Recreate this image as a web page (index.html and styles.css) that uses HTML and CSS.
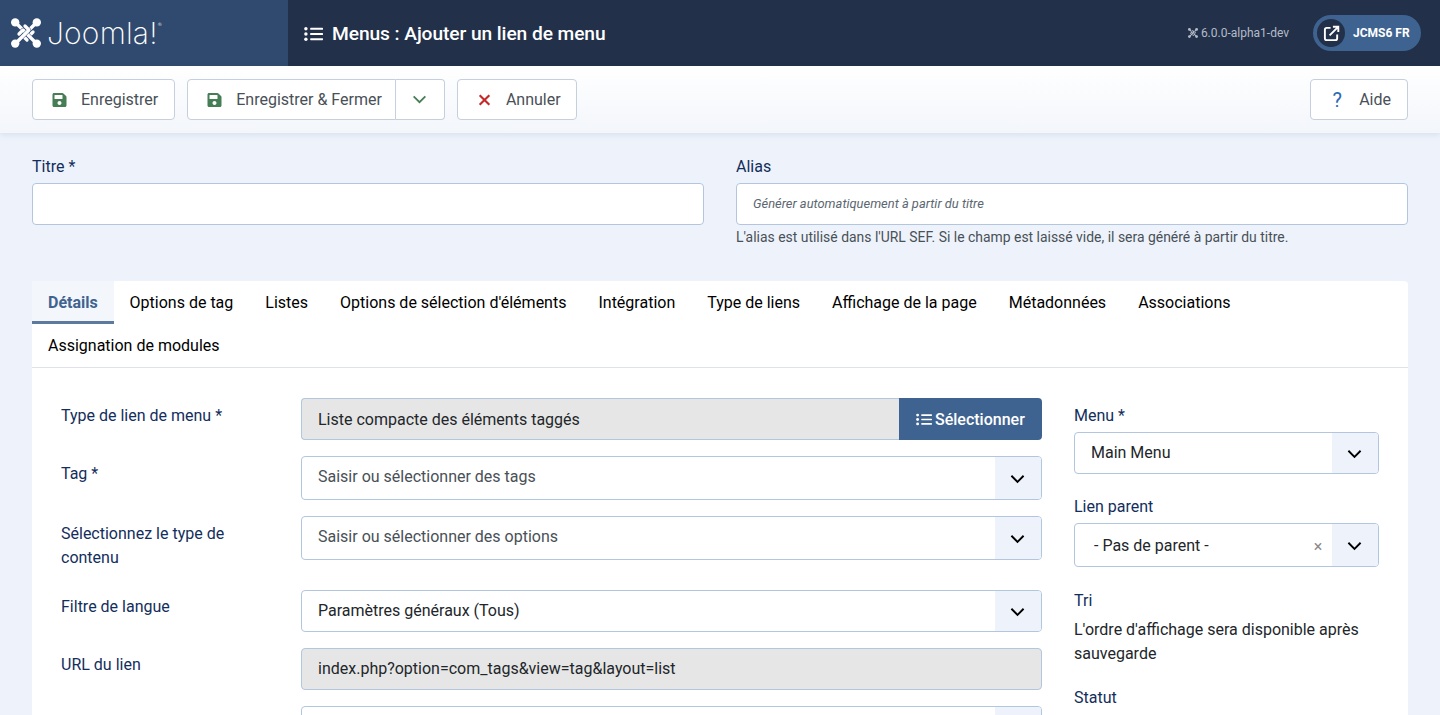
FILE: index.html
```html
<!DOCTYPE html>
<html lang="fr">
<head>
<meta charset="utf-8">
<title>Menus : Ajouter un lien de menu</title>
<link rel="stylesheet" href="styles.css">
</head>
<body>
<svg class="defs" width="0" height="0">
  <symbol id="i-joomla" viewBox="0 0 30 30">
    <g fill="none" stroke-linejoin="round" stroke-linecap="round">
      <path class="weave-under" d="M4 4 L18 18 L22 14"/>
      <path class="weave-over" d="M4 4 L18 18 L22 14"/>
      <path class="weave-under" d="M26 4 L12 18 L16 22"/>
      <path class="weave-over" d="M26 4 L12 18 L16 22"/>
      <path class="weave-under" d="M26 26 L12 12 L8 16"/>
      <path class="weave-over" d="M26 26 L12 12 L8 16"/>
      <path class="weave-under" d="M4 26 L18 12 L14 8"/>
      <path class="weave-over" d="M4 26 L18 12 L14 8"/>
    </g>
    <g fill="currentColor">
      <circle cx="4.200" cy="4.400" r="4.200"/>
      <circle cx="25.800" cy="4.400" r="4.200"/>
      <circle cx="4.200" cy="25.600" r="4.200"/>
      <circle cx="25.800" cy="25.600" r="4.200"/>
    </g>
  </symbol>
  <symbol id="i-list" viewBox="0 0 20 16">
    <g fill="currentColor">
      <circle cx="2" cy="2.500" r="1.800"/>
      <circle cx="2" cy="8" r="1.800"/>
      <circle cx="2" cy="13.500" r="1.800"/>
      <rect x="6.500" y="1.500" width="13.500" height="2" rx=".6"/>
      <rect x="6.500" y="7" width="13.500" height="2" rx=".6"/>
      <rect x="6.500" y="12.500" width="13.500" height="2" rx=".6"/>
    </g>
  </symbol>
  <symbol id="i-save" viewBox="0 0 448 512">
    <path fill="currentColor" d="M433.941 129.941l-83.882-83.882A48 48 0 0 0 316.118 32H48C21.49 32 0 53.49 0 80v352c0 26.51 21.49 48 48 48h352c26.51 0 48-21.49 48-48V163.882a48 48 0 0 0-14.059-33.941zM224 416c-35.346 0-64-28.654-64-64 0-35.346 28.654-64 64-64s64 28.654 64 64c0 35.346-28.654 64-64 64zm96-304.520V212c0 6.627-5.373 12-12 12H76c-6.627 0-12-5.373-12-12V108c0-6.627 5.373-12 12-12h228.520c3.183 0 6.235 1.264 8.485 3.515l3.480 3.480A11.996 11.996 0 0 1 320 111.480z"/>
  </symbol>
  <symbol id="i-chevron" viewBox="0 0 16 10">
    <path d="M1.500 1.500 L8 8 L14.500 1.500" fill="none" stroke="currentColor" stroke-width="2"/>
  </symbol>
</svg>

<header class="topbar">
  <div class="brand">
    <svg class="brand-icon"><use href="#i-joomla"/></svg>
    <span class="brand-name">Joomla!<sup class="brand-reg">®</sup></span>
  </div>
  <div class="topbar-main">
    <svg class="title-icon"><use href="#i-list"/></svg>
    <h1 class="page-title">Menus : Ajouter un lien de menu</h1>
    <div class="version">
      <svg class="version-icon"><use href="#i-joomla"/></svg>
      <span>6.0.0-alpha1-dev</span>
    </div>
    <div class="site-pill">
      <span class="site-pill-icon">
        <svg viewBox="0 0 18 18" class="ext-icon">
          <path d="M8 3 H4 a2 2 0 0 0 -2 2 V14 a2 2 0 0 0 2 2 H13 a2 2 0 0 0 2 -2 V10" fill="none" stroke="currentColor" stroke-width="2"/>
          <path d="M7 11 L15.500 2.500 M10.500 1.800 H16.200 V7.500" fill="none" stroke="currentColor" stroke-width="2"/>
        </svg>
      </span>
      <span class="site-pill-text">JCMS6 FR</span>
    </div>
  </div>
</header>

<nav class="toolbar">
  <button class="btn btn-save"><svg class="btn-icon green"><use href="#i-save"/></svg>Enregistrer</button>
  <div class="btn-group">
    <button class="btn btn-main"><svg class="btn-icon green"><use href="#i-save"/></svg>Enregistrer &amp; Fermer</button>
    <button class="btn btn-toggle"><svg class="toggle-chevron"><use href="#i-chevron"/></svg></button>
  </div>
  <button class="btn">
    <svg class="btn-icon red" viewBox="0 0 14 14"><path d="M2.500 2.500 L11.500 11.500 M11.500 2.500 L2.500 11.500" fill="none" stroke="currentColor" stroke-width="2"/></svg>Annuler
  </button>
  <button class="btn btn-help"><span class="help-mark">?</span>Aide</button>
</nav>

<main class="content">
  <section class="title-row">
    <div class="field">
      <label class="label">Titre *</label>
      <div class="input"></div>
    </div>
    <div class="field">
      <label class="label">Alias</label>
      <div class="input placeholder">Générer automatiquement à partir du titre</div>
      <p class="help">L'alias est utilisé dans l'URL SEF. Si le champ est laissé vide, il sera généré à partir du titre.</p>
    </div>
  </section>

  <section class="card">
    <div class="tabs">
      <a class="tab active">Détails</a>
      <a class="tab">Options de tag</a>
      <a class="tab">Listes</a>
      <a class="tab">Options de sélection d'éléments</a>
      <a class="tab">Intégration</a>
      <a class="tab">Type de liens</a>
      <a class="tab">Affichage de la page</a>
      <a class="tab">Métadonnées</a>
      <a class="tab">Associations</a>
      <a class="tab">Assignation de modules</a>
    </div>
    <div class="panel">
      <div class="main-col">
        <div class="row">
          <label class="row-label">Type de lien de menu *</label>
          <div class="input-group">
            <div class="input readonly grow">Liste compacte des éléments taggés</div>
            <button class="select-btn"><svg class="select-btn-icon"><use href="#i-list"/></svg><span class="select-btn-text">Sélectionner</span></button>
          </div>
        </div>
        <div class="row">
          <label class="row-label">Tag *</label>
          <div class="select tall muted"><span class="select-text">Saisir ou sélectionner des tags</span><span class="select-arrow"><svg class="chevron"><use href="#i-chevron"/></svg></span></div>
        </div>
        <div class="row">
          <label class="row-label">Sélectionnez le type de contenu</label>
          <div class="select tall muted"><span class="select-text">Saisir ou sélectionner des options</span><span class="select-arrow"><svg class="chevron"><use href="#i-chevron"/></svg></span></div>
        </div>
        <div class="row">
          <label class="row-label tight">Filtre de langue</label>
          <div class="select"><span class="select-text">Paramètres généraux (Tous)</span><span class="select-arrow"><svg class="chevron"><use href="#i-chevron"/></svg></span></div>
        </div>
        <div class="row">
          <label class="row-label tight">URL du lien</label>
          <div class="input readonly">index.php?option=com_tags&amp;view=tag&amp;layout=list</div>
        </div>
        <div class="row">
          <span></span>
          <div class="select"><span class="select-text"></span><span class="select-arrow"></span></div>
        </div>
      </div>
      <aside class="side-col">
        <div class="side-field">
          <label class="label">Menu *</label>
          <div class="select"><span class="select-text">Main Menu</span><span class="select-arrow"><svg class="chevron"><use href="#i-chevron"/></svg></span></div>
        </div>
        <div class="side-field wide-gap">
          <label class="label">Lien parent</label>
          <div class="select tall"><span class="select-text indented">- Pas de parent -</span><span class="select-clear">×</span><span class="select-arrow"><svg class="chevron"><use href="#i-chevron"/></svg></span></div>
        </div>
        <div class="side-field">
          <label class="label">Tri</label>
          <p class="side-text">L'ordre d'affichage sera disponible après sauvegarde</p>
        </div>
        <div class="side-field">
          <label class="label">Statut</label>
        </div>
      </aside>
    </div>
  </section>
</main>
</body>
</html>
```

FILE: styles.css
```css
* { box-sizing: border-box; }
html, body { height: 715px; overflow: hidden; }
body {
  margin: 0;
  background: #eef3fb;
  color: #22262a;
  font-family: Roboto, "Liberation Sans", sans-serif;
  font-size: 16px;
  line-height: 24px;
}
.defs { position: absolute; }
p, h1 { margin: 0; }

/* Top bar */
.topbar { display: flex; height: 66px; background: #22304a; color: #fff; --weave: #22304a; }
.brand {
  width: 288px;
  display: flex;
  align-items: center;
  padding-left: 11px;
  background: #2f4a6e;
  --weave: #2f4a6e;
}
.weave-under { stroke: var(--weave); stroke-width: 4.2; }
.weave-over { stroke: currentColor; stroke-width: 3.3; }
.brand-icon { width: 30px; height: 30px; margin-right: 6px; color: #fff; }
.brand-name {
  font-family: Inter, Lato, sans-serif;
  font-weight: 200;
  font-size: 30px;
  line-height: 30px;
  letter-spacing: .2px;
}
.brand-reg { font-size: 6px; line-height: 0; vertical-align: 17px; }
.topbar-main { flex: 1; display: flex; align-items: center; padding: 0 19px 0 16px; }
.title-icon { width: 19px; height: 16px; margin: 1px 9px 0 0; color: #fff; }
.page-title { flex: 1; margin-top: 1px; font-size: 19.2px; font-weight: 500; line-height: 24px; letter-spacing: -.08px; }
.version {
  display: flex;
  align-items: center;
  gap: 3px;
  margin-right: 24px;
  font-size: 12px;
  color: #b4bcc8;
}
.version-icon { width: 10px; height: 10px; color: #b4bcc8; }
.site-pill {
  display: flex;
  align-items: center;
  width: 108px;
  height: 36px;
  padding-left: 4px;
  border-radius: 18px;
  background: #3f6390;
}
.site-pill-icon {
  display: flex;
  align-items: center;
  justify-content: center;
  width: 28px;
  height: 28px;
  border-radius: 50%;
  background: #22304a;
}
.ext-icon { width: 17px; height: 17px; color: #fff; }
.site-pill-text { margin-left: 8px; font-size: 12px; font-weight: 700; color: #fff; }

/* Toolbar */
.toolbar {
  display: flex;
  gap: 12px;
  height: 67px;
  padding: 13px 32px;
  background: linear-gradient(#fff, #f3f6fb);
  box-shadow: 0 2px 6px rgba(40, 70, 120, .1);
  position: relative;
}
.btn {
  display: flex;
  align-items: center;
  height: 41px;
  padding: 0 15px 0 19px;
  background: #fff;
  border: 1px solid #c5cfdd;
  border-radius: 4px;
  color: #495057;
  font: 400 16px/24px Roboto, sans-serif;
}
.btn-save { padding-right: 16px; }
.btn-icon { width: 15px; height: 16px; margin-right: 14px; flex: none; }
.green { color: #457d54; }
.red { color: #c52827; }
.btn-group { display: flex; }
.btn-main { border-radius: 4px 0 0 4px; padding-right: 13px; }
.btn-toggle { width: 49px; padding: 0; justify-content: center; border-left: 0; border-radius: 0 4px 4px 0; }
.toggle-chevron { width: 15px; height: 9px; color: #457d54; }
.btn-help { margin-left: auto; padding: 0 16px 0 20px; }
.help-mark { width: 12px; margin-right: 16px; color: #2a69b8; font-size: 20px; font-weight: 400; text-align: center; }

/* Form */
.content { padding: 21px 32px 0; }
.title-row { display: grid; grid-template-columns: 1fr 1fr; gap: 32px; height: 127px; }
.label { display: block; padding-top: 1px; margin-bottom: 4px; height: 25px; color: #132e5c; }
.input {
  height: 42px;
  padding: 8px 16px;
  background: #fff;
  border: 1px solid #b2c6e0;
  border-radius: 4px;
}
.placeholder { font-size: 12.9px; font-style: italic; color: #5c6670; }
.help { margin-top: 1px; font-size: 13.93px; line-height: 22px; color: #495057; }

.card { background: #fff; border-radius: 4px 4px 0 0; }
.tabs { display: flex; flex-wrap: wrap; border-bottom: 1px solid #dfe3e9; }
.tab { height: 43px; padding: 10px 16px 0; color: #000; }
.tab.active {
  width: 81.6px;
  background: #f3f6fa;
  border-bottom: 3px solid #5c7a9f;
  color: #3f6390;
  font-weight: 700;
}
.panel { display: flex; gap: 32px; padding: 30px 29px; }
.main-col { width: 981px; flex: none; display: flex; flex-direction: column; gap: 16px; }
.row { display: grid; grid-template-columns: 240px 741px; align-items: start; }
.row-label { display: block; padding: 6px 40px 4px 0; color: #132e5c; }
.row-label.tight { padding: 5px 40px 5px 0; }
.input-group { display: flex; }
.readonly { background: #e6e6e6; }
.grow { flex: 1; padding-top: 9px; border-radius: 4px 0 0 4px; border-right: 0; }
.select-btn {
  display: flex;
  align-items: center;
  width: 143px;
  height: 42px;
  padding: 0 0 0 17px;
  border: 0;
  border-radius: 0 4px 4px 0;
  background: #3f6390;
  color: #fff;
  font: 500 16px/24px Roboto, sans-serif;
}
.select-btn-icon { width: 16px; height: 13px; margin-right: 3px; }
.select-btn-text { margin-top: 2px; }
.select {
  display: flex;
  align-items: center;
  height: 42px;
  background: #fff;
  border: 1px solid #b2c6e0;
  border-radius: 4px;
  overflow: hidden;
}
.select.tall { height: 44px; }
.select-text { flex: 1; padding-left: 16px; }
.select-text.indented { margin-top: 2px; padding-left: 19px; }
.muted .select-text { margin-top: -2px; color: #495057; }
.select-clear { width: 30px; margin-top: 3px; padding-left: 2px; color: #8a8a8a; font-size: 16px; text-align: center; }
.select-arrow {
  display: flex;
  align-items: center;
  justify-content: center;
  width: 46px;
  height: 100%;
  padding-right: 1px;
  background: #eef3fb;
}
.chevron { width: 15px; height: 10px; margin-top: 2px; color: #000; }
.side-col { width: 305px; flex: none; padding-top: 5px; }
.side-field { margin-bottom: 20px; }
.side-field.wide-gap { margin-bottom: 21px; }
.side-text { margin: 5px 0 -1px; }
```
